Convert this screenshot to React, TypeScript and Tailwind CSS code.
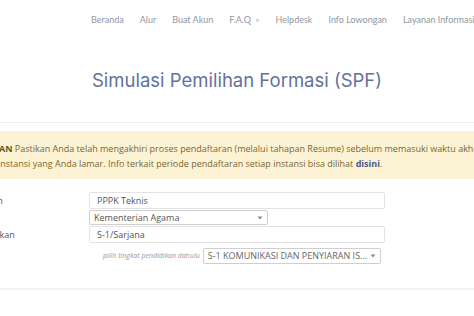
import React from 'react';

const navItems = ['Beranda', 'Alur', 'Buat Akun', 'FAQ', 'Helpdesk', 'Info Lowongan', 'Layanan Informasi'];

const Caret = () => (
  <svg width="6" height="4" viewBox="0 0 6 4" className="shrink-0">
    <path d="M0.5 0.5 L3 3.5 L5.5 0.5 Z" fill="#8a8a8a" />
  </svg>
);

export default function App() {
  return (
    <div className="w-[474px] h-[316px] overflow-hidden bg-white" style={{ fontFamily: '"Open Sans", sans-serif' }}>
      {/* NAVBAR */}
      <nav className="h-[40px] flex items-center pl-[91px] gap-[16px] whitespace-nowrap text-[9px] text-[#9097a2]" style={{ fontFamily: 'Lato, sans-serif' }}>
        {navItems.map((item) => (
          <span key={item} className="flex items-center gap-[4px]">
            {item === 'FAQ' ? 'F.A.Q' : item}
            {item === 'FAQ' && <span className="text-[8px]">&gt;</span>}
          </span>
        ))}
      </nav>

      {/* TITULO */}
      <h1 className="pt-[27px] pb-[29px] text-center text-[18.5px] leading-[26px] text-[#63719a]" style={{ fontFamily: 'Inter, sans-serif' }}>
        Simulasi Pemilihan Formasi (SPF)
      </h1>
      <div className="h-px bg-[#ececec]" />

      {/* ALERT */}
      <div className="mt-[8px] bg-[#fcf3d4] pt-[10px] pb-[8px] whitespace-nowrap text-[9px] leading-[15px] text-[#7d6533]">
        <div className="-ml-[39px]">
          <b className="text-[#6b5420]">PERHATIAN</b> Pastikan Anda telah mengakhiri proses pendaftaran (melalui tahapan Resume) sebelum memasuki waktu akhir pendaftaran di
        </div>
        <div className="-ml-[2px]">
          instansi yang Anda lamar. Info terkait periode pendaftaran setiap instansi bisa dilihat <b className="text-[#4b5a86]">disini</b>.
        </div>
      </div>

      {/* FORM */}
      <div className="mt-[13px] flex flex-col gap-[1px] text-[9px] text-[#555]">
        <div className="flex items-center">
          <div className="w-[89px] -ml-[66px] whitespace-nowrap">Jenis Pengadaan</div>
          <div className="ml-[66px] w-[296px] h-[17px] border border-[#e3e3e3] rounded-[2px] px-[7px] flex items-center">PPPK Teknis</div>
        </div>
        <div className="flex items-center pl-[89px]">
          <div className="w-[179px] h-[15px] border border-[#cfcfcf] rounded-[2px] px-[4px] flex items-center justify-between">
            <span>Kementerian Agama</span>
            <Caret />
          </div>
        </div>
        <div className="flex items-center">
          <div className="w-[89px] -ml-[32px] whitespace-nowrap">Pendidikan</div>
          <div className="ml-[32px] w-[296px] h-[17px] border border-[#e3e3e3] rounded-[2px] px-[7px] flex items-center">S-1/Sarjana</div>
        </div>
        <div className="flex items-center mt-[4px] pl-[103px] gap-[3px] whitespace-nowrap">
          <span className="italic text-[7px] text-[#999]">pilih tingkat pendidikan dahulu</span>
          <div className="w-[178px] h-[16px] border border-[#cfcfcf] rounded-[2px] px-[4px] flex items-center justify-between text-[#666]">
            <span>S-1 KOMUNIKASI DAN PENYIARAN IS...</span>
            <Caret />
          </div>
        </div>
      </div>

      <div className="mt-[24px] h-[2px] bg-[#f2f2f2]" />
    </div>
  );
}
